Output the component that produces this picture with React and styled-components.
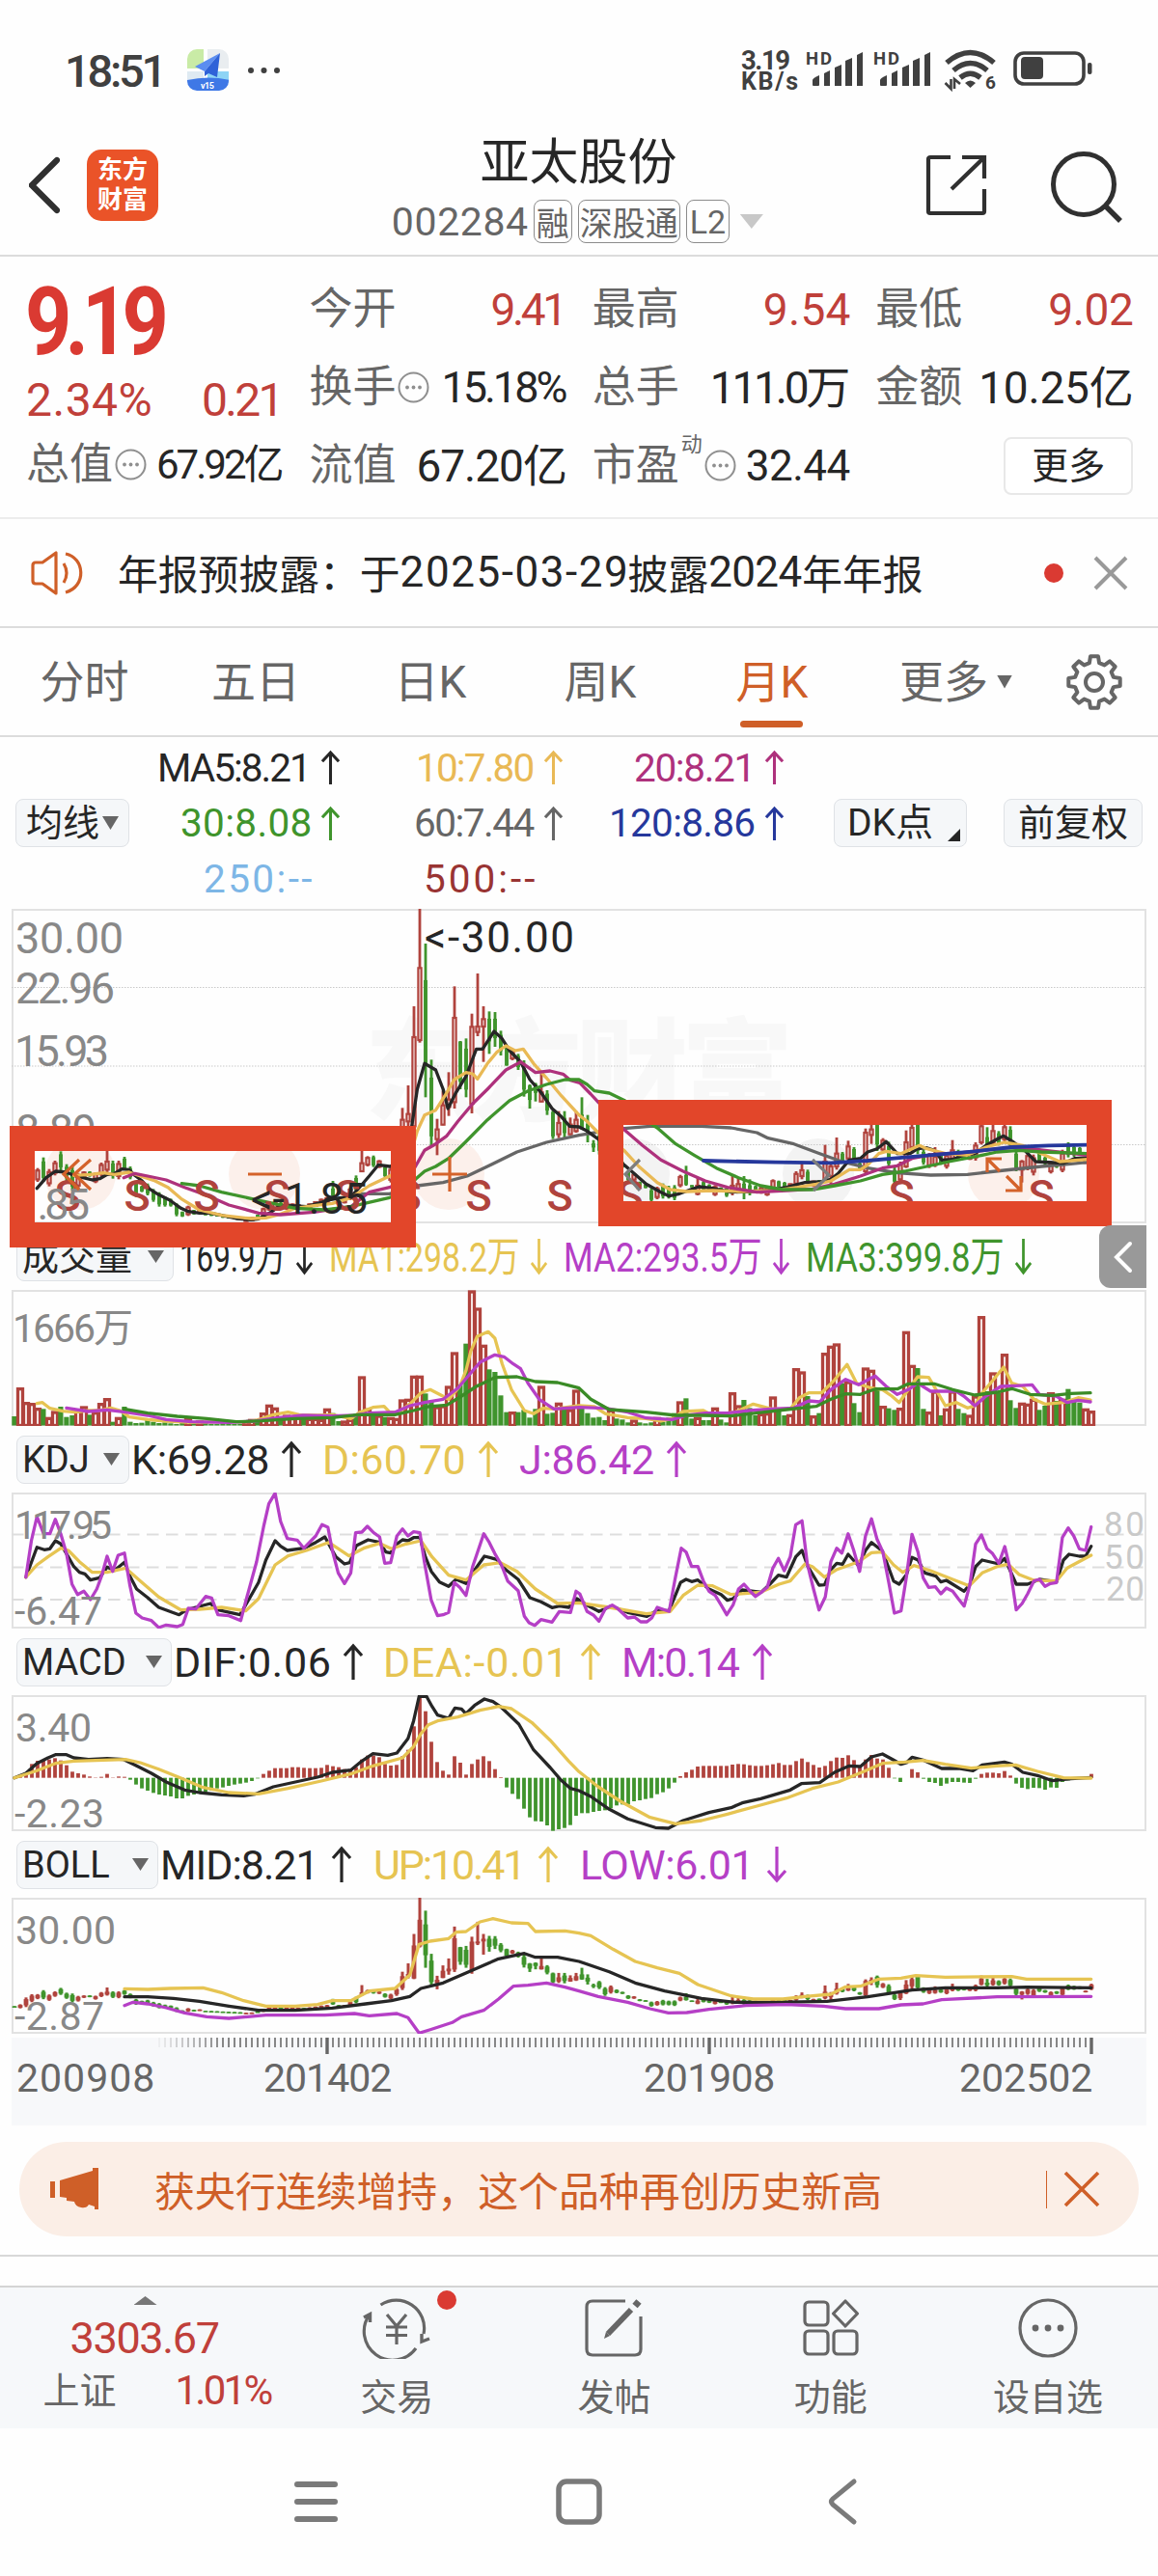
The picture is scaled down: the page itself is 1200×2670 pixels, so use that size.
import React, { useLayoutEffect, useRef, useState } from "react";
import styled, { createGlobalStyle } from "styled-components";

const colors = {
	ink: "#262626",
	gray: "#666666",
	red: "#c0403a",
	brightRed: "#da3a32",
	up: "#b0433d",
	down: "#3f942c",
	yellow: "#e6c452",
	amber: "#e9b955",
	orange: "#cf5f28",
	magenta: "#ae317c",
	purple: "#b53fc6",
	blue: "#26389c",
	sky: "#7db6e6",
	maroon: "#993433",
	line: "#dcdcdc",
	frame: "#e2e2e2",
	chip: "#f5f7f9",
};

/* ---------- data ---------- */

// one entry per month from 2009-08: r / g for the candle side and the bar top level
const VOLUME =
	"g593 r505 r550 r553 r568 g570 r597 r578 g563 g595 g590 r575 r563 g588 r580 r553 r538 g610 r597 g563 g610 g614 g613 g603 g610 g614 g612 g615 g617 g612 r600 g612 r607 g612 g617 g617 g615 g617 g617 g616 r608 r603 g610 r583 r558 r567 g597 r590 r592 r590 g600 r600 r600 r603 r570 g583 g608 r608 r603 g585 r470 r570 g590 r590 g595 r597 r600 r542 r540 r468 r468 g522 g548 r563 r560 r500 r395 g495 g367 r203 r257 r372 g447 g455 g528 g580 r580 g580 g573 g597 g570 r500 g585 g582 r552 g570 r572 r512 g565 g583 g597 g595 g605 r573 g600 g603 g612 r605 g612 g615 g612 r597 g610 g597 g583 r548 g537 g600 r597 g605 g605 r567 g603 g612 r520 r560 g542 g567 g590 r585 r583 r533 g570 g590 r588 r445 r455 g530 r592 g583 r397 r375 r368 g490 r485 g552 g580 r443 r450 g510 r562 g568 g573 r568 r330 r435 g443 g570 r580 r515 g590 r570 r515 g570 g583 r590 r530 r283 g515 r458 g520 r400 g543 g567 r552 r555 r540 g573 g560 r520 g545 r540 g508 g543 g550 r570 r577"
		.split(" ")
		.map((s) => ({ up: s[0] === "r", top: Number(s.slice(1)) }));

// high-low, or high-low/bodyTop-bodyBottom when the wick is long
const CANDLES =
	"945-955 930-965 873-954 846-913 845-888 812-888 848-902 822-868 793-852 833-885 840-915 860-908 855-878 855-872 858-892 828-870 790-858/825-850 822-878 822-880 810-852 840-880 885-935 900-920 893-930 910-950 920-965 933-965 940-965 955-995 980-997 962-994 975-990 972-986 984-992 986-994 988-996 990-1000 992-1002 994-1004 996-1006 1000-1012 998-1010 990-1000 968-995 952-978 948-978 950-975 952-975 955-975 958-972 960-974 955-972 948-966 940-962 935-958 885-935/910-930 935-955 935-955 905-945 868-922 770-858/830-855 808-840 806-842 820-845 838-875 842-890 792-860 658-811/695-795 588-714/677-700 342-720/438-715 39-455/223-447 147-625/262-520 508-780/565-745 692-805/725-755 605-712/650-710 547-683/632-655 280-660/378-640 450-600/453-575 442-625/475-600 365-675/406-645 240-435/405-422 342-515/382-405 358-490/382-450 360-468/382-440 418-495/432-480 465-527/470-525 475-510 490-540/498-530 510-623/535-600 585-660/590-632 580-638/585-610 548-640/610-638 603-680/615-665 665-755/672-745 668-752/705-740 668-755/690-735 688-742/710-740 668-735/695-730 625-725/680-722 680-765/708-740 758-795/770-780 735-803/745-790 787-860 773-841 806-838 825-845 854-886 862-885 887-905 895-908 908-950 903-942 893-940 900-940 898-945 866-905 838-900/868-895 898-905 873-930/900-925 885-915 895-920 898-932 905-920 905-935 868-930/900-920 873-918/895-915 870-942/895-920 880-930/900-915 900-918 903-925 903-932 880-912 884-905 888-912 893-906 855-902 831-880/852-870 850-895 884-902 882-896 773-890/825-880 828-895/840-870 750-850/800-840 795-830 760-820/778-815 780-822 828-852 722-862/735-855 705-770/725-742 690-792/700-770 752-795 763-845 843-895 825-895/835-880 728-845/765-840 695-800/720-780 690-802/700-790 788-835 798-845 780-842/810-835 803-835 798-847 758-822/790-815 788-820 795-815 798-820 765-822 690-772/715-765 718-790/750-770 695-775/730-765 730-775 705-765/718-755 715-785 790-855 820-890/825-850 798-852 803-868 785-828 810-835 823-862 820-845 788-858/800-850 765-812 775-810 780-805 815-832 758-812"
		.split(" ")
		.map((s) => {
			const [range, body] = s.split("/");
			const [high, low] = range.split("-").map(Number);
			const pad = (low - high) * 0.18;
			const [open, close] = body ? body.split("-").map(Number) : [high + pad, low - pad];
			return { high, low, open, close };
		});

const MACD_BARS = [
	455, 453, 445, 414, 404, 403, 400, 396, 403, 418, 438, 443, 447, 453, 456, 454, 445, 456, 453, 454, 463, 478, 490,
	497, 504, 509, 512, 515, 521, 521, 513, 509, 504, 500, 496, 490, 487, 482, 478, 475, 472, 467, 459, 445, 435, 427,
	427, 427, 424, 424, 426, 427, 427, 426, 417, 421, 424, 430, 430, 424, 400, 388, 388, 393, 414, 419, 417, 390, 370,
	297, 203, 250, 345, 408, 435, 447, 390, 410, 447, 414, 400, 390, 405, 430, 455, 487, 507, 523, 553, 580, 592, 593,
	605, 622, 617, 613, 604, 575, 567, 567, 563, 560, 558, 552, 543, 540, 540, 530, 527, 523, 520, 508, 502, 490, 472,
	452, 440, 432, 422, 420, 420, 420, 420, 420, 416, 414, 415, 418, 420, 420, 418, 415, 411, 417, 417, 405, 397, 408,
	417, 425, 420, 405, 394, 395, 387, 402, 420, 400, 386, 397, 400, 426, 459, 470, 457, 430, 440, 460, 470, 473, 482,
	475, 470, 470, 472, 473, 460, 445, 441, 441, 443, 436, 450, 475, 488, 492, 488, 489, 494, 487, 488, 470, 465, 461,
	459, 458, 445,
];

const pts = (s) => s.split(" ").map((p) => p.split(",").map(Number));

const MA = {
	ma5: "100,908 125,875 150,855 180,858 200,868 225,875 250,882 270,878 290,865 310,862 330,848 350,850 365,868 385,885 405,910 430,928 460,945 490,970 510,980 540,985 570,985 600,992 640,1002 680,1006 700,1003 730,985 755,965 790,962 830,965 860,955 890,945 920,938 950,935 970,910 1000,870 1025,835 1055,840 1080,830 1100,780 1115,715 1130,600 1150,520 1180,540 1200,600 1213,660 1235,610 1262,560 1290,475 1307,475 1338,420 1358,440 1380,480 1410,515 1435,570 1465,610 1495,660 1520,685 1543,715 1568,717 1590,730 1620,755 1690,835 1720,865 1750,895 1790,920 1812,932 1840,925 1870,912 1893,903 1930,908 1980,920 2030,918 2080,915 2130,905 2180,890 2220,888 2250,880 2270,862 2300,820 2330,815 2350,795 2375,785 2400,763 2430,800 2465,800 2485,785 2510,782 2530,790 2550,820 2580,818 2610,805 2640,800 2670,775 2700,755 2718,745 2745,765 2775,790 2805,825 2850,828 2880,830 2910,815 2945,813",
	ma10: "200,868 245,865 280,860 310,865 350,858 380,870 420,885 455,905 490,940 540,975 600,992 680,1002 720,1000 755,990 800,970 850,962 900,955 950,938 1000,900 1055,870 1090,850 1110,810 1130,730 1150,680 1180,665 1205,620 1230,570 1262,548 1280,552 1293,568 1320,520 1345,485 1370,465 1395,480 1417,475 1445,520 1480,565 1520,620 1568,680 1590,700 1620,735 1690,790 1730,840 1780,890 1815,912 1860,918 1930,915 2000,918 2100,915 2160,905 2210,895 2250,885 2300,850 2330,850 2350,835 2380,800 2400,793 2440,800 2490,775 2510,785 2560,800 2620,805 2670,780 2720,765 2770,775 2820,800 2870,825 2945,818",
	ma20: "335,875 365,862 400,870 450,882 500,905 560,930 620,960 700,985 760,990 850,982 950,965 1000,920 1055,905 1100,880 1125,840 1150,790 1180,770 1210,745 1240,700 1280,645 1320,600 1370,540 1410,515 1450,548 1490,543 1525,553 1545,572 1570,580 1600,615 1620,640 1690,725 1740,775 1790,820 1850,855 1910,885 1970,905 2050,920 2130,915 2200,910 2260,895 2330,870 2390,845 2430,838 2470,815 2530,802 2600,798 2680,788 2750,780 2830,790 2945,805",
	ma30: "492,893 540,900 600,920 680,940 740,955 800,970 880,975 950,965 1055,937 1100,920 1125,880 1150,855 1180,840 1215,815 1260,765 1320,695 1380,635 1430,605 1480,585 1530,570 1568,570 1590,585 1610,605 1650,612 1692,635 1740,690 1780,720 1830,770 1880,805 1940,845 2000,875 2060,900 2120,912 2200,912 2260,900 2330,885 2390,865 2450,855 2510,840 2570,825 2640,810 2700,795 2760,790 2820,795 2945,800",
	ma60: "962,925 1055,925 1130,900 1200,890 1265,870 1320,840 1400,795 1480,765 1568,743 1620,733 1690,722 1760,715 1900,715 1980,720 2050,735 2080,752 2150,770 2220,800 2280,825 2350,845 2430,860 2520,867 2620,865 2720,852 2820,840 2900,832 2945,827",
	ma120: "1905,822 2100,827 2250,829 2350,822 2450,812 2540,803 2640,793 2740,780 2840,775 2945,773",
};

const VOL = {
	ma1: "100,553 115,550 135,568 170,577 205,580 240,575 270,575 300,567 325,575 350,595 400,603 450,608 520,612 600,610 680,610 710,600 740,588 780,580 810,588 860,590 900,588 950,600 975,580 1010,565 1040,562 1055,580 1080,580 1110,555 1140,520 1165,510 1190,525 1215,540 1245,500 1262,450 1275,390 1292,345 1322,330 1340,350 1360,430 1385,510 1420,575 1445,585 1470,568 1500,570 1568,560 1610,563 1640,585 1700,597 1750,600 1790,608 1820,600 1850,578 1905,575 1930,590 1990,580 2040,555 2090,570 2140,570 2165,535 2190,520 2225,520 2260,480 2294,432 2320,490 2360,505 2390,510 2415,530 2435,550 2460,510 2485,470 2515,472 2535,510 2560,560 2590,550 2620,567 2640,560 2660,520 2690,480 2718,440 2740,490 2770,500 2800,540 2830,555 2880,550 2920,535 2953,542",
	ma2: "180,567 240,578 290,573 340,580 400,590 450,603 520,610 620,612 690,608 750,598 820,590 900,592 960,590 1000,583 1070,580 1110,560 1150,550 1200,540 1240,505 1270,465 1300,425 1340,402 1365,408 1390,430 1410,445 1430,490 1460,540 1500,570 1568,565 1640,568 1700,580 1750,598 1820,603 1860,590 1910,583 1970,583 2030,575 2090,570 2150,567 2190,545 2220,548 2250,510 2290,478 2325,495 2350,480 2370,468 2400,500 2430,525 2460,510 2485,490 2520,515 2590,515 2610,530 2640,560 2670,530 2710,500 2750,498 2795,495 2815,525 2860,530 2890,550 2920,543 2953,548",
	ma3: "335,570 400,583 480,593 560,600 640,610 710,607 800,600 900,597 970,588 1070,588 1120,575 1160,563 1210,558 1250,530 1290,500 1340,472 1400,470 1450,485 1510,488 1545,498 1568,505 1600,540 1650,572 1750,580 1830,590 1900,590 1980,592 2070,580 2130,572 2210,562 2250,540 2290,523 2330,525 2370,508 2430,508 2460,492 2530,492 2580,510 2640,527 2700,518 2740,507 2790,525 2850,528 2900,522 2953,520",
};

const KDJ = {
	j: "70,1093 85,980 100,905 118,958 135,958 150,913 165,960 180,1020 195,1115 210,1147 227,1137 245,1163 262,1130 275,1090 290,1028 305,1075 320,1025 337,1018 352,1120 368,1205 385,1220 410,1228 430,1250 450,1242 480,1247 495,1240 510,1190 530,1192 557,1153 573,1158 590,1210 620,1213 652,1228 665,1170 695,1045 715,930 728,865 745,832 760,920 778,973 805,978 823,1003 855,965 872,930 888,938 900,1010 916,1080 933,1113 950,1080 963,955 980,953 995,935 1012,955 1028,968 1042,1050 1058,1048 1075,965 1090,943 1105,965 1120,952 1137,955 1150,1050 1168,1165 1185,1213 1200,1210 1215,1203 1230,1110 1245,1125 1262,1150 1280,1060 1310,958 1325,985 1340,1020 1358,1055 1375,1105 1403,1135 1420,1215 1433,1235 1448,1243 1465,1225 1495,1233 1515,1200 1545,1203 1560,1137 1570,1145 1590,1200 1608,1212 1622,1230 1640,1190 1658,1180 1672,1190 1700,1220 1718,1217 1735,1232 1752,1232 1765,1220 1780,1187 1812,1200 1828,1100 1845,1003 1858,1015 1873,1060 1890,1060 1905,1105 1920,1137 1937,1150 1953,1180 1968,1210 1985,1180 2000,1130 2015,1115 2030,1135 2046,1153 2062,1140 2078,1125 2093,1065 2108,1035 2124,1073 2140,1030 2155,930 2172,918 2186,1050 2203,1130 2218,1195 2235,1155 2250,1045 2266,1003 2280,1018 2297,958 2312,1010 2328,1075 2344,965 2360,912 2375,975 2391,1015 2407,1110 2422,1205 2440,1198 2455,1090 2470,960 2486,1015 2500,1095 2515,1125 2533,1123 2548,1145 2563,1127 2580,1137 2595,1160 2611,1183 2627,1115 2642,990 2658,962 2673,1005 2688,1020 2705,1050 2721,998 2737,1075 2752,1195 2768,1175 2783,1145 2800,1105 2815,1100 2830,1122 2845,1113 2861,1110 2877,970 2893,940 2908,965 2923,1005 2940,1010 2955,937",
	k: "70,1093 100,1000 120,1008 135,1005 150,980 165,990 180,1020 200,1060 215,1078 230,1083 245,1102 270,1095 290,1062 310,1072 337,1047 352,1090 370,1130 400,1157 430,1187 460,1200 485,1210 505,1195 570,1175 590,1195 650,1210 665,1180 700,1110 720,1040 745,980 760,997 778,1010 823,1003 855,985 880,968 895,1000 910,1030 933,1052 947,1048 965,995 997,977 1028,985 1045,1015 1058,1018 1075,990 1090,977 1105,980 1120,970 1137,970 1152,1030 1168,1075 1190,1108 1215,1122 1235,1100 1262,1113 1280,1080 1312,1028 1345,1038 1370,1070 1403,1100 1435,1157 1465,1170 1495,1188 1515,1183 1540,1187 1562,1160 1590,1180 1622,1200 1655,1183 1700,1203 1752,1215 1780,1197 1812,1197 1843,1110 1858,1100 1873,1107 1890,1102 1920,1130 1953,1147 1970,1165 1985,1160 2010,1133 2062,1140 2085,1115 2108,1087 2130,1093 2155,1030 2172,1010 2188,1060 2218,1118 2233,1117 2250,1070 2266,1050 2282,1053 2297,1022 2325,1058 2344,1010 2360,985 2390,1012 2420,1105 2435,1115 2455,1085 2470,1032 2486,1040 2505,1080 2535,1090 2548,1108 2563,1103 2611,1137 2627,1115 2642,1060 2660,1040 2705,1052 2721,1035 2752,1115 2783,1115 2815,1100 2861,1108 2880,1040 2895,1022 2923,1028 2940,1028 2955,997",
	d: "70,1093 100,1055 130,1030 165,1003 185,1010 215,1045 250,1078 290,1078 340,1065 380,1105 430,1155 490,1195 540,1193 600,1187 665,1198 700,1160 745,1055 780,1027 830,1010 890,985 910,1000 945,1027 985,1003 1028,988 1060,1005 1100,990 1140,980 1170,1030 1215,1087 1262,1102 1310,1055 1355,1048 1400,1075 1450,1130 1510,1175 1568,1173 1650,1187 1750,1207 1815,1200 1850,1150 1890,1118 1930,1120 1980,1147 2060,1140 2110,1115 2140,1105 2180,1052 2200,1060 2233,1093 2265,1070 2325,1045 2360,1017 2390,1015 2420,1055 2445,1078 2475,1057 2520,1073 2580,1100 2625,1120 2660,1080 2700,1060 2730,1053 2760,1085 2800,1103 2861,1105 2890,1065 2955,1025",
};

const MACD = {
	dif: "39,457 70,443 100,412 130,395 150,385 180,385 200,395 240,400 290,397 335,400 370,420 410,443 450,470 500,495 540,503 600,510 660,513 690,508 740,485 800,470 860,455 900,440 950,433 980,405 1010,382 1050,387 1075,380 1105,335 1120,280 1135,204 1155,204 1170,235 1185,262 1215,272 1232,240 1250,243 1262,258 1285,232 1312,212 1335,220 1358,238 1405,290 1445,370 1490,425 1520,465 1545,490 1568,497 1600,515 1650,555 1700,585 1775,612 1810,614 1850,590 1920,565 1980,550 2010,535 2060,522 2140,495 2170,475 2220,472 2260,440 2300,420 2330,422 2360,392 2390,383 2420,402 2440,415 2455,410 2470,393 2500,402 2550,428 2600,428 2635,435 2660,417 2720,408 2740,415 2770,440 2810,450 2850,466 2900,460 2955,456",
	dea: "39,457 100,435 150,412 200,405 340,400 380,410 430,430 490,458 550,487 620,503 700,507 780,490 870,467 950,445 1010,420 1090,395 1120,360 1140,320 1160,292 1185,280 1240,268 1300,247 1350,235 1385,242 1440,285 1490,340 1540,405 1568,438 1620,485 1680,530 1760,580 1830,600 1900,590 1970,570 2050,545 2130,520 2200,490 2270,470 2340,437 2390,412 2450,408 2500,403 2560,415 2630,427 2700,420 2750,417 2810,437 2880,457 2955,458",
};

const BOLL = {
	up: "337,1113 400,1115 460,1112 550,1110 600,1125 660,1150 720,1167 800,1167 860,1162 900,1150 950,1150 1000,1120 1070,1112 1110,1070 1135,975 1165,965 1215,957 1235,937 1262,935 1300,905 1335,895 1385,908 1430,910 1450,935 1530,933 1568,940 1600,948 1660,990 1720,1028 1780,1048 1840,1065 1890,1100 1980,1135 2040,1145 2120,1145 2180,1137 2250,1130 2290,1107 2330,1105 2380,1083 2440,1080 2480,1072 2560,1077 2740,1075 2780,1083 2955,1083",
	mid: "337,1138 400,1138 470,1143 540,1152 620,1167 700,1180 800,1180 900,1173 990,1160 1060,1150 1110,1137 1140,1112 1200,1095 1280,1055 1350,1020 1420,1003 1450,1015 1510,1015 1568,1028 1650,1060 1720,1095 1800,1120 1900,1143 1990,1155 2100,1155 2240,1152 2350,1138 2470,1117 2560,1110 2700,1110 2780,1108 2955,1110",
	low: "337,1165 360,1155 400,1160 450,1172 500,1188 560,1200 620,1205 720,1195 880,1195 960,1190 1000,1197 1075,1190 1105,1203 1135,1251 1165,1240 1225,1218 1250,1200 1310,1180 1350,1145 1390,1105 1430,1102 1480,1095 1530,1108 1568,1120 1620,1137 1700,1155 1760,1175 1810,1188 1860,1187 1920,1177 2020,1165 2130,1162 2230,1167 2290,1175 2380,1175 2440,1163 2500,1160 2550,1147 2700,1138 2955,1137",
};

/* ---------- chart helpers ---------- */

const UNIT_X = 0.38265;
const toX = (u) => u * UNIT_X - 12;
const monthX = (i) => 3 + i * 6;

const linePath = (data, top) =>
	"M" +
	pts(data)
		.map(([u, v]) => `${toX(u).toFixed(1)} ${((v - top) / 3).toFixed(1)}`)
		.join("L");

const Curve = ({ data, top, color, width = 3.3 }) => (
	<path
		d={linePath(data, top)}
		fill="none"
		stroke={color}
		strokeWidth={width}
		strokeLinejoin="round"
		strokeLinecap="round"
	/>
);

const AxisLabel = ({ x = 5, y, w, size = 41, color = "#888", children }) => (
	<AxisText x={x} y={y} textLength={w} fontSize={size} fill={color}>
		{children}
	</AxisText>
);

const Fit = ({ w, squeeze, children }) => {
	const ref = useRef(null);
	const [style, setStyle] = useState({});

	useLayoutEffect(() => {
		const natural = ref.current.offsetWidth;
		if (squeeze) {
			setStyle({ transform: `scaleX(${w / natural})` });
		} else {
			const gaps = Math.max(1, String(children).length - 1);
			setStyle({ letterSpacing: `${(w - natural) / gaps}px` });
		}
	}, []);

	return (
		<Slot $w={w}>
			<SlotText ref={ref} style={style}>
				{children}
			</SlotText>
		</Slot>
	);
};

const Arrow = ({ down, w = 20, h = 37 }) => (
	<ArrowSvg width={w} height={h} viewBox="0 0 20 37" preserveAspectRatio="none">
		<path
			d={down ? "M10 0V35M1 25L10 35L19 25" : "M10 37V2M1 12L10 2L19 12"}
			fill="none"
			stroke="currentColor"
			strokeWidth="3.2"
		/>
	</ArrowSvg>
);

const MoreDots = () => (
	<svg width="33" height="33" viewBox="0 0 33 33">
		<circle cx="16.5" cy="16.5" r="15" fill="none" stroke="#8f8f8f" strokeWidth="2" />
		<circle cx="10" cy="16.5" r="1.9" fill="#8f8f8f" />
		<circle cx="16.5" cy="16.5" r="1.9" fill="#8f8f8f" />
		<circle cx="23" cy="16.5" r="1.9" fill="#8f8f8f" />
	</svg>
);

/* ---------- top ---------- */

const Signal = ({ x }) => (
	<g>
		<SvgBold x={x - 7} y="28.5" fontSize="18.5" textLength="27">
			HD
		</SvgBold>
		<path d={`M${x} 50v-5q0 -2 7 -5v10q0 1 -1 1h-5q-1 0 -1 -1z`} />
		<path d={`M${x + 12} 38l6 -3v16h-6z`} />
		<path d={`M${x + 23} 32l7 -3v22h-7z`} />
		<path d={`M${x + 34} 25l7 -3v29h-7z`} />
		<path d={`M${x + 46} 19l6 -3v35h-6z`} />
	</g>
);

const StatusBar = () => (
	<Status>
		<Clock>
			<Fit w={106}>18:51</Fit>
		</Clock>
		<MapIcon width="44" height="44" viewBox="0 0 44 44">
			<clipPath id="mapClip">
				<rect width="43" height="43" rx="10" />
			</clipPath>
			<g clipPath="url(#mapClip)">
				<rect width="44" height="44" fill="#fff" />
				<rect width="17" height="20" fill="#c9eba6" />
				<rect x="21" width="23" height="20" fill="#e9edf0" />
				<rect y="23" width="17" height="12" fill="#dfeaf2" />
				<rect x="21" y="23" width="23" height="12" fill="#8ed4f5" />
				<path d="M0 32Q22 27 44 32V44H0z" fill="#3f78e6" />
				<path d="M34 4L8 18L18 23z" fill="#5b8df0" />
				<path d="M34 4L18 23V28L22 25L31 29z" fill="#2f62d8" />
				<SvgBold x="14" y="41" fontSize="9" fill="#fff" textLength="14">
					v15
				</SvgBold>
			</g>
		</MapIcon>
		<svg width="34" height="8" viewBox="0 0 34 8" fill="#404040">
			<circle cx="4" cy="4" r="3" />
			<circle cx="17.500" cy="4" r="3" />
			<circle cx="31" cy="4" r="3" />
		</svg>
		<Grow />
		<svg width="400" height="70" viewBox="0 0 400 70" fill="#404040">
			<SvgBold x="28" y="33.5" fontSize="27.5" textLength="51">
				3.19
			</SvgBold>
			<SvgBold x="28" y="55" fontSize="25" textLength="59">
				KB/s
			</SvgBold>
			<Signal x={102} />
			<Signal x={172} />
			<g fill="none" stroke="#404040" strokeWidth="5.5">
				<path d="M241 27Q265.500 6 290 27" />
				<path d="M248 35Q265.500 20 283 35" />
				<path d="M255 42.500Q265.500 34 276 42.500" />
			</g>
			<path d="M260 48q5.500 -5 11 0l-5.500 5z" />
			<path d="M245.500 44v10l-6 -6M249 54v-10l6 5" fill="none" stroke="#404040" strokeWidth="2.6" />
			<SvgBold x="281" y="54" fontSize="19">
				6
			</SvgBold>
			<rect x="312" y="17" width="71" height="32" rx="9" fill="none" stroke="#404040" strokeWidth="3.6" />
			<rect x="318" y="21" width="23" height="23" rx="4" />
			<rect x="387" y="27" width="4.500" height="12" rx="2" />
		</svg>
	</Status>
);

const TitleBar = () => (
	<Header>
		<svg width="32" height="60" viewBox="0 0 32 60">
			<path d="M29 4L3 30L29 56" fill="none" stroke="#303030" strokeWidth="6.2" strokeLinecap="round" />
		</svg>
		<Logo>
			<span>东方</span>
			<span>财富</span>
		</Logo>
		<TitleBlock>
			<StockName>亚太股份</StockName>
			<CodeRow>
				<Fit w={141}>002284</Fit>
				<Tag $w={40}>融</Tag>
				<Tag $w={106}>深股通</Tag>
				<Tag $w={45}>L2</Tag>
				<Caret $w={24} $h={15} $c="#c8c8c8" />
			</CodeRow>
		</TitleBlock>
		<svg width="66" height="66" viewBox="0 0 66 66" fill="none" stroke="#303030" strokeWidth="4.2">
			<path d="M27 4H6a2 2 0 0 0 -2 2V60a2 2 0 0 0 2 2H60a2 2 0 0 0 2 -2V37" />
			<path d="M39 4H62V26M61 5L28 37" />
		</svg>
		<SearchSvg width="76" height="76" viewBox="0 0 76 76" fill="none" stroke="#303030">
			<circle cx="35" cy="35" r="31.500" strokeWidth="5" />
			<path d="M57 57L73 73" strokeWidth="5.500" />
		</SearchSvg>
	</Header>
);

const Field = ({ label, value, w, color, size = 46, info, sup }) => (
	<FieldRow>
		<FieldName>{label}</FieldName>
		{sup && <Sup>{sup}</Sup>}
		{info && <MoreDots />}
		<Grow />
		<Value $c={color} $size={size}>
			<Fit w={w}>{value}</Fit>
		</Value>
	</FieldRow>
);

const QuotePanel = () => (
	<Quote>
		<QuoteCol>
			<Price>
				<Fit w={142} squeeze>
					9.19
				</Fit>
			</Price>
			<Change>
				<Fit w={131}>2.34%</Fit>
				<Fit w={86}>0.21</Fit>
			</Change>
			<Field label="总值" value="67.92亿" w={133} size={42} info />
		</QuoteCol>
		<QuoteCol>
			<Field label="今开" value="9.41" w={80} color={colors.red} />
			<Field label="换手" value="15.18%" w={131} size={45} info />
			<Field label="流值" value="67.20亿" w={157} />
		</QuoteCol>
		<QuoteCol>
			<Field label="最高" value="9.54" w={91} color={colors.red} />
			<Field label="总手" value="111.0万" w={146} />
			<Field label="市盈" value="32.44" w={109} sup="动" size={44} info />
		</QuoteCol>
		<QuoteCol>
			<Field label="最低" value="9.02" w={89} color={colors.red} />
			<Field label="金额" value="10.25亿" w={161} />
			<FieldRow>
				<Grow />
				<MoreButton>更多</MoreButton>
			</FieldRow>
		</QuoteCol>
	</Quote>
);

const Notice = () => (
	<NoticeRow>
		<svg width="58" height="48" viewBox="0 0 58 48" fill="none" stroke={colors.orange} strokeWidth="3.2">
			<path d="M3 16Q3 13 6 13H13L27 3V45L13 35H6Q3 35 3 32z" strokeLinejoin="round" />
			<path d="M35 14Q41 24 35 34" />
			<path d="M37 4C57 8 59 38 37 44" />
		</svg>
		<NoticeText>
			年报预披露：于<Fit w={236}>2025-03-29</Fit>披露<Fit w={97}>2024</Fit>年年报
		</NoticeText>
		<Grow />
		<Dot />
		<svg width="36" height="36" viewBox="0 0 36 36" stroke="#999" strokeWidth="4">
			<path d="M2 2L34 34M34 2L2 34" />
		</svg>
	</NoticeRow>
);

const gearPath = () => {
	const out = [];
	for (let i = 0; i < 8; i++) {
		const a = (i * Math.PI) / 4 - Math.PI / 2;
		[
			[-0.25, 20.5],
			[-0.15, 27],
			[0.15, 27],
			[0.25, 20.5],
		].forEach(([d, r]) => out.push(`${(29 + r * Math.cos(a + d)).toFixed(1)} ${(29 + r * Math.sin(a + d)).toFixed(1)}`));
	}
	return `M${out.join("L")}z`;
};

const PeriodTabs = () => (
	<Tabs>
		<Tab $w={175}>分时</Tab>
		<Tab $w={180}>五日</Tab>
		<Tab $w={182}>日K</Tab>
		<Tab $w={170}>周K</Tab>
		<Tab $w={186} $active>
			月K
		</Tab>
		<Tab $w={195}>
			<span>更多</span>
			<Caret $w={16} $h={14} $c="#666" />
		</Tab>
		<GearSvg width="58" height="58" viewBox="0 0 58 58" fill="none" stroke="#666" strokeWidth="4">
			<path d={gearPath()} strokeLinejoin="round" />
			<circle cx="29" cy="29" r="9" />
		</GearSvg>
	</Tabs>
);

const Avg = ({ color, w, arrow = true, children }) => (
	<AvgCell $c={color}>
		<Fit w={w}>{children}</Fit>
		<ArrowSlot>{arrow && <Arrow w={19} h={35} />}</ArrowSlot>
	</AvgCell>
);

const Averages = () => (
	<AvgPanel>
		<LeftChip>
			均线
			<Caret $w={17} $h={14} $c="#666" />
		</LeftChip>
		<AvgGrid>
			<Avg color={colors.ink} w={160}>MA5:8.21</Avg>
			<Avg color={colors.amber} w={123}>10:7.80</Avg>
			<Avg color={colors.magenta} w={126}>20:8.21</Avg>
			<Avg color={colors.down} w={136}>30:8.08</Avg>
			<Avg color={colors.gray} w={125}>60:7.44</Avg>
			<Avg color={colors.blue} w={152}>120:8.86</Avg>
			<Avg color={colors.sky} w={112} arrow={false}>250:--</Avg>
			<Avg color={colors.maroon} w={115} arrow={false}>500:--</Avg>
		</AvgGrid>
		<DkChip>
			DK点
			<Corner />
		</DkChip>
		<RightChip>前复权</RightChip>
	</AvgPanel>
);

/* ---------- charts ---------- */

const S_MARKS = [70, 142, 214, 287, 360, 423, 496, 580, 653, 934, 1079];

const PriceChart = () => (
	<ChartSvg width="1176" height="326" viewBox="0 0 1176 326">
		<Watermark x="366" y="211" textLength="444">
			东方财富
		</Watermark>
		<g fill="#fcf0eb">
			<circle cx="71" cy="275" r="37" />
			<circle cx="262" cy="275" r="37" />
			<circle cx="453" cy="275" r="37" />
			<circle cx="1028" cy="275" r="37" />
		</g>
		<g fill="#f3f3f3">
			<circle cx="645" cy="275" r="37" />
			<circle cx="836" cy="275" r="37" />
		</g>
		<g stroke="#c9c9c9" strokeWidth="1" strokeDasharray="1.5 1.500">
			<path d="M0 81.5H1176M0 163H1176M0 244.5H1176" />
		</g>
		{CANDLES.map((c, i) => {
			const y = (v) => (v - 39) / 3;
			const { up } = VOLUME[i];
			const x = monthX(i);
			const bodyHeight = Math.max(1, y(c.close) - y(c.open));
			return (
				<g key={i} fill={up ? "#fff" : colors.down} stroke={up ? colors.up : colors.down}>
					<path d={`M${x} ${y(c.high)}V${y(c.low)}`} strokeWidth="2.8" />
					<rect x={x - 1.6} y={y(c.open)} width="3.2" height={bodyHeight} strokeWidth={up ? 2.2 : 0.8} />
				</g>
			);
		})}
		<Curve data={MA.ma60} top={39} color={colors.gray} />
		<Curve data={MA.ma5} top={39} color={colors.ink} />
		<Curve data={MA.ma10} top={39} color={colors.amber} />
		<Curve data={MA.ma20} top={39} color={colors.magenta} />
		<Curve data={MA.ma30} top={39} color={colors.down} />
		<Curve data={MA.ma120} top={39} color={colors.blue} width={3.8} />
		{S_MARKS.map((x) => (
			<MarkText key={x} x={x - 12} y="313">
				S
			</MarkText>
		))}
		<AxisLabel x={4} y={46} w={112} size={45}>30.00</AxisLabel>
		<AxisLabel x={4} y={98} w={103} size={45}>22.96</AxisLabel>
		<AxisLabel x={3} y={163} w={98} size={45}>15.93</AxisLabel>
		<AxisLabel x={4} y={245} w={84} size={45}>8.89</AxisLabel>
		<AxisLabel y={322} w={76} size={45}>1.85</AxisLabel>
		<AxisLabel x={428} y={45} w={155} size={44} color={colors.ink}>{"<-30.00"}</AxisLabel>
		<AxisLabel x={248} y={316} w={121} size={44} color={colors.ink}>{"<-1.85"}</AxisLabel>
		<g fill="none" stroke="#d4622a" strokeWidth="3.2">
			<path d="M70 260L54 275L70 291M82 260L65 275L82 291M245 275H280M436 275H472M454 257V293" />
			<path d="M1011 273V259H1026M1011 259L1024 272M1030 292H1046V277M1046 292L1031 277" />
		</g>
		<g fill="none" stroke="#7d7d7d" strokeWidth="3.2">
			<path d="M651 260L636 275L651 292M830 260L847 276L831 292" />
		</g>
	</ChartSvg>
);

const VolumeChart = () => (
	<ChartSvg width="1176" height="141" viewBox="0 0 1176 141">
		{VOLUME.map((v, i) => {
			const y = (v.top - 200) / 3;
			return v.up ? (
				<rect key={i} x={monthX(i) - 2.5} y={y + 1} width="5" height={139.5 - y} fill="#fff" stroke={colors.up} strokeWidth="3.3" />
			) : (
				<rect key={i} x={monthX(i) - 2.7} y={y} width="5.2" height={140.5 - y} fill={colors.down} />
			);
		})}
		<Curve data={VOL.ma1} top={200} color={colors.yellow} />
		<Curve data={VOL.ma2} top={200} color={colors.purple} />
		<Curve data={VOL.ma3} top={200} color="#3a8b26" />
		<AxisLabel x={1} y={53.5} w={125}>1666万</AxisLabel>
	</ChartSvg>
);

const KdjChart = () => (
	<ChartSvg width="1176" height="141" viewBox="0 0 1176 141">
		<path d="M0 43.500H1176M0 77.500H1176M0 111H1176" stroke="#dedede" strokeWidth="2" strokeDasharray="12.500 7.500" />
		<Curve data={KDJ.k} top={830} color={colors.ink} />
		<Curve data={KDJ.d} top={830} color={colors.yellow} />
		<Curve data={KDJ.j} top={830} color={colors.purple} />
		<AxisLabel x={3} y={48} w={101}>117.95</AxisLabel>
		<AxisLabel x={3} y={137} w={91}>-6.47</AxisLabel>
		<AxisLabel x={1132} y={44.5} w={42} size={35} color="#c9c9c9">80</AxisLabel>
		<AxisLabel x={1132} y={78.5} w={42} size={35} color="#c9c9c9">50</AxisLabel>
		<AxisLabel x={1134} y={112} w={40} size={35} color="#c9c9c9">20</AxisLabel>
	</ChartSvg>
);

const MacdChart = () => (
	<ChartSvg width="1176" height="141" viewBox="0 0 1176 141">
		{MACD_BARS.map((v, i) => (
			<path
				key={i}
				d={`M${monthX(i)} ${257 / 3}V${(v - 200) / 3}`}
				stroke={v <= 457 ? colors.up : colors.down}
				strokeWidth="3.8"
			/>
		))}
		<Curve data={MACD.dif} top={200} color={colors.ink} />
		<Curve data={MACD.dea} top={200} color={colors.yellow} />
		<AxisLabel x={4} y={48} w={79}>3.40</AxisLabel>
		<AxisLabel x={3} y={137} w={93}>-2.23</AxisLabel>
	</ChartSvg>
);

const BollChart = () => (
	<ChartSvg width="1176" height="141" viewBox="0 0 1176 141">
		{CANDLES.map((c, i) => {
			const y = (v) => (v - 39) / 3 / 2.691;
			const x = monthX(i);
			const color = VOLUME[i].up ? colors.up : colors.down;
			return (
				<g key={i} stroke={color}>
					<path d={`M${x} ${y(c.high)}V${y(c.low)}`} strokeWidth="3" />
					<path d={`M${x} ${y(c.open)}V${Math.max(y(c.close), y(c.open) + 1.5)}`} strokeWidth="4.8" />
				</g>
			);
		})}
		<Curve data={BOLL.mid} top={830} color={colors.ink} />
		<Curve data={BOLL.up} top={830} color={colors.yellow} />
		<Curve data={BOLL.low} top={830} color={colors.purple} />
		<AxisLabel x={4} y={48} w={104}>30.00</AxisLabel>
		<AxisLabel x={3} y={137} w={93}>-2.87</AxisLabel>
	</ChartSvg>
);

const TimeAxis = () => (
	<Axis>
		<svg width="1176" height="18" viewBox="0 0 1176 18">
			{Array.from({ length: 162 }, (_, k) => k + 25).map((i) => (
				<path
					key={i}
					d={`M${monthX(i)} 0V10`}
					stroke="#7a7a7a"
					strokeWidth="1.8"
					strokeOpacity={Math.min(1, (i - 24) / 12)}
				/>
			))}
			<path d={`M${monthX(54)} 0V17M${monthX(120)} 0V17M${monthX(186)} 0V17`} stroke="#666" strokeWidth="3.4" />
		</svg>
		<AxisDates>
			<AxisDate $left={5}>
				<Fit w={143}>200908</Fit>
			</AxisDate>
			<AxisDate $left={113}>
				<Fit w={133}>201402</Fit>
			</AxisDate>
			<AxisDate $left={261}>
				<Fit w={136}>201908</Fit>
			</AxisDate>
			<AxisDate $left={191}>
				<Fit w={138}>202502</Fit>
			</AxisDate>
		</AxisDates>
	</Axis>
);

const IndicatorRow = ({ name, chipWidth, items, narrow }) => (
	<IndicatorHead>
		<IndicatorChip $w={chipWidth}>
			{name}
			<Caret $w={17} $h={13} $c="#666" />
		</IndicatorChip>
		{items.map((it) => (
			<Indicator key={it.text} $c={it.color} $gap={it.gap} $narrow={narrow}>
				<Fit w={it.w} squeeze={narrow}>
					{it.text}
				</Fit>
				<Arrow down={it.down} w={narrow ? 17 : 20} />
			</Indicator>
		))}
	</IndicatorHead>
);

const Charts = () => (
	<ChartArea>
		<Frame $h={326}>
			<PriceChart />
		</Frame>
		<IndicatorRow
			name="成交量"
			chipWidth={163}
			narrow
			items={[
				{ text: "169.9万", w: 110, color: colors.ink, gap: 6, down: true },
				{ text: "MA1:298.2万", w: 198, color: colors.yellow, gap: 17, down: true },
				{ text: "MA2:293.5万", w: 206, color: colors.purple, gap: 17, down: true },
				{ text: "MA3:399.8万", w: 206, color: colors.down, gap: 17, down: true },
			]}
		/>
		<Frame $h={141}>
			<VolumeChart />
		</Frame>
		<IndicatorRow
			name="KDJ"
			chipWidth={117}
			items={[
				{ text: "K:69.28", w: 143, color: colors.ink, gap: 2 },
				{ text: "D:60.70", w: 149, color: colors.yellow, gap: 22 },
				{ text: "J:86.42", w: 140, color: colors.purple, gap: 22 },
			]}
		/>
		<Frame $h={141}>
			<KdjChart />
		</Frame>
		<IndicatorRow
			name="MACD"
			chipWidth={161}
			items={[
				{ text: "DIF:0.06", w: 163, color: colors.ink, gap: 2 },
				{ text: "DEA:-0.01", w: 192, color: colors.yellow, gap: 21 },
				{ text: "M:0.14", w: 123, color: colors.purple, gap: 22 },
			]}
		/>
		<Frame $h={141}>
			<MacdChart />
		</Frame>
		<IndicatorRow
			name="BOLL"
			chipWidth={147}
			items={[
				{ text: "MID:8.21", w: 165, color: colors.ink, gap: 2 },
				{ text: "UP:10.41", w: 158, color: colors.yellow, gap: 23 },
				{ text: "LOW:6.01", w: 181, color: colors.purple, gap: 23, down: true },
			]}
		/>
		<Frame $h={141}>
			<BollChart />
		</Frame>
		<TimeAxis />
		<Highlight $x={10} $y={225} $w={421} $h={126} />
		<Highlight $x={620} $y={198} $w={532} $h={131} />
		<SideHandle>
			<svg width="22" height="34" viewBox="0 0 22 34">
				<path d="M18 3L4 17L18 31" fill="none" stroke="#fff" strokeWidth="4" strokeLinecap="round" />
			</svg>
		</SideHandle>
	</ChartArea>
);

/* ---------- bottom ---------- */

const PromoBanner = () => (
	<PromoWrap>
		<Promo>
			<svg width="52" height="44" viewBox="0 0 52 44" fill={colors.orange}>
				<rect x="0" y="14" width="5" height="17" />
				<path d="M10 13L44 3V0H50V43H46V40L40 38Q38 42 32 41Q26 40 25 35L17 34V31L10 30z" />
			</svg>
			<PromoText>获央行连续增持，这个品种再创历史新高</PromoText>
			<Grow />
			<PromoDivider />
			<svg width="38" height="38" viewBox="0 0 38 38" stroke={colors.orange} strokeWidth="3.6">
				<path d="M2 2L36 36M36 2L2 36" />
			</svg>
		</Promo>
	</PromoWrap>
);

const NavBar = () => (
	<Nav>
		<IndexCell>
			<UpCaret />
			<IndexValue>
				<Fit w={156}>3303.67</Fit>
			</IndexValue>
			<IndexRow>
				<IndexName>上证</IndexName>
				<Fit w={102}>1.01%</Fit>
			</IndexRow>
		</IndexCell>
		<NavItem $w={225}>
			<svg width="72" height="64" viewBox="0 0 72 64" fill="none" stroke="#666" strokeWidth="3.2">
				<path d="M19.500 8A29 29 0 0 1 64 38M56 53A29 29 0 0 1 8 18" />
				<path d="M2 21L8.500 17.500V26M70 43L62 46V38" strokeWidth="3.400" />
				<path d="M26 18L36 30L46 18M36 30V49M25 31H47M25 39.500H47" />
			</svg>
			<span>交易</span>
			<NavDot />
		</NavItem>
		<NavItem $w={227}>
			<svg width="64" height="64" viewBox="0 0 64 64" fill="none" stroke="#666" strokeWidth="3.2">
				<path d="M44 4H10Q4 4 4 10V54Q4 60 10 60H54Q60 60 60 54V20" />
				<path d="M26 38L50 13" strokeWidth="6" />
				<path d="M54 9L58 4.500" strokeWidth="7" />
				<path d="M22 43L24 36L28 40z" fill="#666" stroke="none" />
			</svg>
			<span>发帖</span>
		</NavItem>
		<NavItem $w={223}>
			<svg width="62" height="64" viewBox="0 0 62 64" fill="none" stroke="#666" strokeWidth="3.2">
				<rect x="4" y="5" width="24" height="24" rx="4" />
				<rect x="4" y="35" width="24" height="24" rx="4" />
				<rect x="34" y="35" width="24" height="24" rx="4" />
				<path d="M46 4L58.500 17L46 30L33.500 17z" strokeLinejoin="round" />
			</svg>
			<span>功能</span>
		</NavItem>
		<NavItem $w={229}>
			<svg width="64" height="64" viewBox="0 0 64 64" fill="none" stroke="#666" strokeWidth="3.2">
				<circle cx="32" cy="32" r="29" />
				<g fill="#666" stroke="none">
					<circle cx="19" cy="32" r="3.400" />
					<circle cx="32" cy="32" r="3.400" />
					<circle cx="45" cy="32" r="3.400" />
				</g>
			</svg>
			<span>设自选</span>
		</NavItem>
	</Nav>
);

const SystemNav = () => (
	<SysNav>
		<svg width="45" height="44" viewBox="0 0 45 44" stroke="#7a7a7a" strokeWidth="6" strokeLinecap="round">
			<path d="M3 4H42M3 22H42M3 40H42" />
		</svg>
		<svg width="48" height="48" viewBox="0 0 48 48" fill="none" stroke="#7a7a7a" strokeWidth="5.500">
			<rect x="3" y="3" width="42" height="42" rx="8" />
		</svg>
		<svg width="34" height="50" viewBox="0 0 34 50" fill="none" stroke="#7a7a7a" strokeWidth="5">
			<path d="M30 4L8 22Q5 25 8 28L30 46" strokeLinecap="round" />
		</svg>
	</SysNav>
);

const App = () => (
	<>
		<GlobalStyle />
		<Page>
			<StatusBar />
			<TitleBar />
			<QuotePanel />
			<Notice />
			<PeriodTabs />
			<Averages />
			<Charts />
			<PromoBanner />
			<NavBar />
			<SystemNav />
		</Page>
	</>
);

export default App;

/* ---------- styles ---------- */

const GlobalStyle = createGlobalStyle`
	* {
		box-sizing: border-box;
	}
	body {
		margin: 0;
		background: #fff;
		font-family: Roboto, "Noto Sans CJK SC", sans-serif;
		color: ${colors.ink};
	}
	svg {
		display: block;
		flex: none;
	}
`;

const Page = styled.div`
	width: 1200px;
	height: 2670px;
	overflow: hidden;
	background: #fefefe;
`;

const Grow = styled.div`
	flex: 1;
`;

const Slot = styled.span`
	display: inline-block;
	flex: none;
	width: ${(props) => props.$w}px;
	white-space: nowrap;
`;

const SlotText = styled.span`
	display: inline-block;
	transform-origin: left center;
`;

const ArrowSvg = styled.svg`
	overflow: visible;
`;

const SvgBold = styled.text`
	font-family: Roboto, sans-serif;
	font-weight: 700;
`;

const AxisText = styled.text`
	font-family: Roboto, "Noto Sans CJK SC", sans-serif;
`;

const MarkText = styled.text`
	font-size: 45px;
	font-weight: 500;
	text-anchor: middle;
	fill: ${colors.up};
`;

const Watermark = styled.text`
	font-family: "Noto Sans CJK SC", sans-serif;
	font-size: 116px;
	font-weight: 900;
	fill: #f8f8f8;
`;

const Caret = styled.i`
	flex: none;
	width: ${(props) => props.$w}px;
	height: ${(props) => props.$h}px;
	background: ${(props) => props.$c};
	clip-path: polygon(0 0, 100% 0, 50% 100%);
`;

const Status = styled.div`
	display: flex;
	align-items: center;
	height: 146px;
	padding: 0 60px 0 67px;
`;

const Clock = styled.div`
	font-size: 47px;
	font-weight: 500;
	color: #404040;
	margin-right: 21px;
`;

const MapIcon = styled.svg`
	margin-right: 18px;
`;

const Header = styled.header`
	display: flex;
	align-items: center;
	height: 120px;
	padding: 0 36px 26px 30px;
	border-bottom: 2px solid ${colors.line};
`;

const Logo = styled.div`
	display: flex;
	flex-direction: column;
	align-items: center;
	justify-content: center;
	width: 74px;
	height: 74px;
	margin-left: 28px;
	border-radius: 15px;
	background: #ea5328;
	color: #fff;
	font-size: 26px;
	font-weight: 700;
	line-height: 31px;
`;

const TitleBlock = styled.div`
	display: flex;
	flex-direction: column;
	align-items: center;
	width: 390px;
	margin: 0 164px 0 241px;
`;

const StockName = styled.h1`
	margin: 6px 0 0 0;
	font-size: 51px;
	font-weight: 400;
	line-height: 62px;
`;

const CodeRow = styled.div`
	display: flex;
	align-items: center;
	align-self: flex-start;
	gap: 6px;
	height: 46px;
	margin: 7px 0 0 1px;
	font-size: 41px;
	color: ${colors.gray};
`;

const Tag = styled.span`
	display: flex;
	flex: none;
	align-items: center;
	justify-content: center;
	width: ${(props) => props.$w}px;
	height: 45px;
	border: 1.5px solid #8c8c8c;
	border-radius: 8px;
	font-size: 34px;
	white-space: nowrap;

	& + i {
		margin-left: 5px;
	}
`;

const SearchSvg = styled.svg`
	margin: 3px 0 0 64px;
`;

const Quote = styled.section`
	display: grid;
	grid-template-columns: repeat(4, 268px);
	column-gap: 25.4px;
	height: 272px;
	padding: 14px 0 0 27px;
	border-bottom: 2px solid #ececec;
`;

const QuoteCol = styled.div`
	display: flex;
	flex-direction: column;
`;

const Price = styled.div`
	height: 107px;
	margin-left: -1px;
	font-size: 98px;
	font-weight: 700;
	line-height: 107px;
	letter-spacing: -8px;
	color: ${colors.brightRed};
`;

const Change = styled.div`
	display: flex;
	justify-content: space-between;
	align-items: center;
	height: 54px;
	font-size: 48px;
	color: ${colors.red};
`;

const FieldRow = styled.div`
	display: flex;
	align-items: center;
	height: 81px;
`;

const FieldName = styled.span`
	margin-right: 2px;
	font-size: 45px;
	line-height: 60px;
	color: ${colors.gray};
	white-space: nowrap;
`;

const Sup = styled.sup`
	align-self: flex-start;
	margin-right: 2px;
	font-size: 22px;
	line-height: 38px;
	color: ${colors.gray};
`;

const Value = styled.span`
	font-size: ${(props) => props.$size}px;
	line-height: 60px;
	color: ${(props) => props.$c || colors.ink};
`;

const MoreButton = styled.button`
	width: 134px;
	height: 60px;
	margin-right: 1px;
	padding: 0;
	border: 2px solid #e8e8e8;
	border-radius: 8px;
	background: #fff;
	font: inherit;
	font-size: 38px;
	line-height: 48px;
	color: ${colors.ink};
`;

const NoticeRow = styled.div`
	display: flex;
	align-items: center;
	height: 113px;
	padding: 0 31px;
	border-bottom: 2px solid ${colors.line};
`;

const NoticeText = styled.p`
	display: flex;
	align-items: center;
	margin: -2px 0 0 33px;
	font-size: 41.8px;
	white-space: nowrap;
	color: ${colors.ink};

	${Slot} {
		font-size: 44px;
	}
`;

const Dot = styled.i`
	width: 20px;
	height: 20px;
	margin-right: 31px;
	border-radius: 50%;
	background: ${colors.brightRed};
`;

const Tabs = styled.nav`
	display: flex;
	align-items: center;
	height: 113px;
	border-bottom: 2px solid ${colors.line};
`;

const Tab = styled.div`
	position: relative;
	display: flex;
	align-items: center;
	justify-content: center;
	gap: 9px;
	width: ${(props) => props.$w}px;
	font-size: 46px;
	line-height: 60px;
	color: ${(props) => (props.$active ? colors.orange : colors.gray)};

	&::after {
		content: "";
		display: ${(props) => (props.$active ? "block" : "none")};
		position: absolute;
		bottom: -17px;
		left: 60px;
		width: 65px;
		height: 7px;
		border-radius: 4px;
		background: ${colors.orange};
	}
`;

const GearSvg = styled.svg`
	margin-left: 17px;
`;

const AvgPanel = styled.div`
	display: flex;
	align-items: center;
	height: 178px;
`;

const Chip = styled.div`
	display: flex;
	flex: none;
	align-items: center;
	justify-content: center;
	height: 50px;
	border: 1.5px solid #dfe2e6;
	border-radius: 8px;
	background: ${colors.chip};
	white-space: nowrap;
`;

const LeftChip = styled(Chip)`
	gap: 3px;
	width: 118px;
	margin-left: 16px;
	font-size: 38px;
	line-height: 46px;
`;

const AvgGrid = styled.div`
	display: grid;
	grid-template-columns: 218px 231px 229px;
	grid-auto-rows: 57.5px;
	width: 730px;
`;

const AvgCell = styled.div`
	display: flex;
	align-items: center;
	justify-content: flex-end;
	font-size: 40.5px;
	color: ${(props) => props.$c};
`;

const ArrowSlot = styled.span`
	width: 29px;
	padding-left: 10px;
`;

const DkChip = styled(Chip)`
	position: relative;
	justify-content: flex-start;
	width: 138px;
	padding-left: 13px;
	font-size: 39px;
	line-height: 46px;
`;

const Corner = styled.i`
	position: absolute;
	right: 6px;
	bottom: 5px;
	width: 13px;
	height: 13px;
	background: ${colors.ink};
	clip-path: polygon(100% 0, 100% 100%, 0 100%);
`;

const RightChip = styled(Chip)`
	width: 144px;
	margin-left: 38px;
	font-size: 38px;
	line-height: 46px;
`;

const ChartArea = styled.main`
	position: relative;
	height: 1260px;
	padding: 0 12px;
`;

const Frame = styled.div`
	height: ${(props) => props.$h}px;
	box-shadow: inset 0 0 0 2px ${colors.frame};
`;

const ChartSvg = styled.svg`
	font-family: Roboto, "Noto Sans CJK SC", sans-serif;
`;

const IndicatorHead = styled.div`
	display: flex;
	align-items: center;
	height: 69px;
	padding-left: 5px;
`;

const IndicatorChip = styled(Chip)`
	justify-content: space-between;
	width: ${(props) => props.$w}px;
	padding: 0 9px 0 5px;
	font-size: 38px;
	line-height: 46px;
`;

const Indicator = styled.div`
	display: flex;
	align-items: center;
	gap: ${(props) => (props.$narrow ? 11 : 13)}px;
	height: 52px;
	margin-left: ${(props) => props.$gap}px;
	font-size: 43px;
	line-height: 52px;
	color: ${(props) => props.$c};
`;

const Axis = styled.div`
	height: 91px;
	margin-top: 4px;
	background: #f7f8fa;
`;

const AxisDates = styled.div`
	display: flex;
	font-size: 41px;
	line-height: 48px;
	color: ${colors.gray};
`;

const AxisDate = styled.div`
	margin-left: ${(props) => props.$left}px;
`;

// thick frames over the parts of the chart to look at
const Highlight = styled.div`
	position: absolute;
	left: ${(props) => props.$x}px;
	top: ${(props) => props.$y}px;
	width: ${(props) => props.$w}px;
	height: ${(props) => props.$h}px;
	border: 26px solid #e2462a;
`;

const SideHandle = styled.div`
	position: absolute;
	right: 12px;
	top: 328px;
	display: flex;
	align-items: center;
	justify-content: center;
	width: 49px;
	height: 65px;
	border-radius: 12px 0 0 12px;
	background: #999;
`;

const PromoWrap = styled.div`
	height: 137px;
	padding: 18px 20px 0;
	border-bottom: 2px solid #d8d8d8;
`;

const Promo = styled.div`
	display: flex;
	align-items: center;
	height: 98px;
	padding: 0 40px 0 32px;
	border-radius: 49px;
	background: #fbeee6;
	color: ${colors.orange};
`;

const PromoText = styled.span`
	margin: -2px 0 0 56px;
	font-size: 41.9px;
	white-space: nowrap;
`;

const PromoDivider = styled.i`
	width: 1.5px;
	height: 39px;
	margin-right: 17px;
	background: ${colors.orange};
`;

const Nav = styled.footer`
	display: flex;
	height: 148px;
	margin-top: 30px;
	padding-left: 2px;
	border-top: 2px solid #d4d4d4;
	background: #f6f8fa;
`;

const IndexCell = styled.div`
	display: flex;
	flex-direction: column;
	align-items: center;
	width: 298px;
	color: ${colors.red};
`;

const UpCaret = styled.i`
	width: 24px;
	height: 9px;
	margin-top: 9px;
	background: #777;
	clip-path: polygon(50% 0, 100% 100%, 0 100%);
`;

const IndexValue = styled.div`
	margin-top: 9px;
	font-size: 45px;
	line-height: 52px;
`;

const IndexRow = styled.div`
	display: flex;
	align-items: center;
	gap: 61px;
	margin-left: 27px;
	font-size: 42px;
	line-height: 56px;
`;

const IndexName = styled.span`
	font-size: 38px;
	color: ${colors.gray};
`;

const NavItem = styled.div`
	position: relative;
	display: flex;
	flex-direction: column;
	align-items: center;
	gap: 15px;
	width: ${(props) => props.$w}px;
	padding-top: 10px;
	font-size: 38px;
	line-height: 50px;
	color: ${colors.gray};
`;

const NavDot = styled.i`
	position: absolute;
	left: 154px;
	top: 3px;
	width: 20px;
	height: 20px;
	border-radius: 50%;
	background: ${colors.brightRed};
`;

const SysNav = styled.div`
	display: flex;
	align-items: center;
	height: 152px;
	padding-left: 305px;

	svg + svg {
		margin-left: 226px;
	}

	svg + svg + svg {
		margin-left: 231px;
	}
`;
